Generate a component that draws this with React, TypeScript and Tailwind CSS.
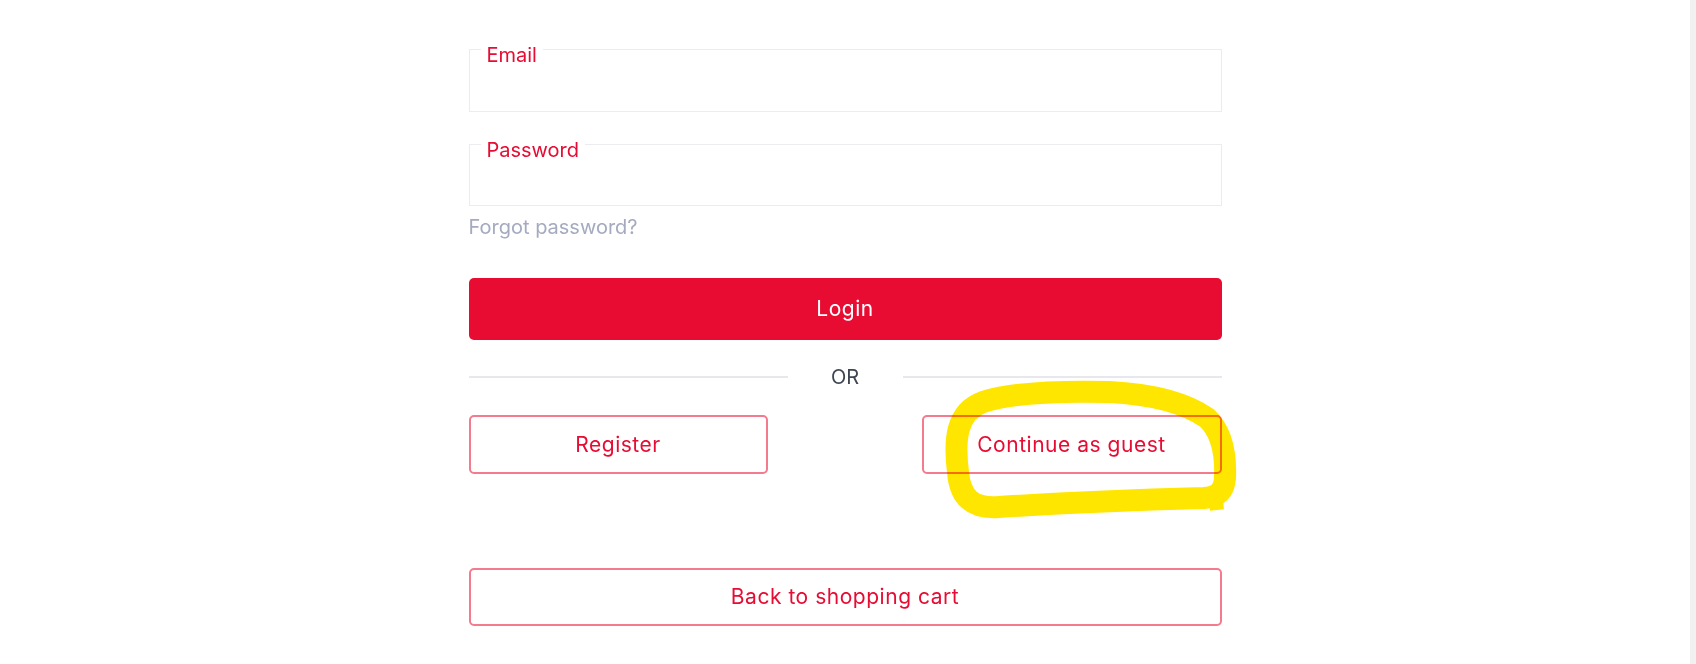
import React from 'react';

function Field({ label, height }: { label: string; height: string }) {
  return (
    <div className={`relative w-full border border-[#ebebf0] ${height}`}>
      <span className="absolute left-[11px] top-[-5px] bg-white px-[6px] text-[20px] leading-[20px] text-[#e60c33]">
        {label}
      </span>
      <input className="h-full w-full bg-transparent px-5 outline-none" aria-label={label} />
    </div>
  );
}

function OutlineButton({ children, className = '' }: { children: React.ReactNode; className?: string }) {
  return (
    <button
      className={`flex items-center justify-center rounded-[5px] border-2 border-[#f47a8e] bg-white text-[21px] tracking-[0.025em] text-[#e60c33] ${className}`}
    >
      {children}
    </button>
  );
}

export default function App() {
  return (
    <div
      className="flex h-[664px] w-full bg-white"
      style={{ fontFamily: 'Inter, "Noto Sans", sans-serif' }}
    >
      <main className="flex flex-1 justify-center">
        <div className="relative w-[753px] pt-[49px]">
          {/* Login form */}
          <Field label="Email" height="h-[63px]" />
          <div className="mt-[32px]">
            <Field label="Password" height="h-[62px]" />
          </div>
          <a className="mt-[7px] block text-[20px] leading-[28px] text-[#a5aac0]">Forgot password?</a>

          <button className="mt-[37px] flex h-[62px] w-full items-center justify-center rounded-[5px] bg-[#e80c33] text-[21px] tracking-[0.025em] text-white">
            Login
          </button>

          {/* Divider */}
          <div className="mt-[23px] flex h-[28px] items-center">
            <div className="h-[2px] flex-1 bg-[#e7e7ee]" />
            <span className="w-[115px] text-center text-[20px] text-[#3f4652]">OR</span>
            <div className="h-[2px] flex-1 bg-[#e7e7ee]" />
          </div>

          <div className="mt-[24px] flex justify-between">
            <OutlineButton className="h-[59px] w-[299px]">Register</OutlineButton>
            <OutlineButton className="h-[59px] w-[300px]">Continue as guest</OutlineButton>
          </div>

          <OutlineButton className="mt-[94px] h-[58px] w-full">Back to shopping cart</OutlineButton>

          {/* Marker highlight drawn over the screenshot */}
          <svg
            className="pointer-events-none absolute left-0 top-0 overflow-visible mix-blend-multiply"
            width="800"
            height="600"
            viewBox="0 0 800 600"
          >
            <path
              d="M489 472 C485 440 487 412 514 402 C545 392 600 391 640 392 C680 394 715 402 738 418 C753 432 757 455 756 478 C755 492 748 497 735 498 C660 500 590 503 530 507 C503 509 491 497 489 472 Z"
              fill="none"
              stroke="#ffe600"
              strokeWidth="22"
              strokeLinejoin="round"
              strokeLinecap="round"
            />
            <path d="M746 490 L748 510" stroke="#ffe600" strokeWidth="14" strokeLinecap="butt" />
          </svg>
        </div>
      </main>
      <div className="w-[6px] bg-[#f1f1f1]" />
    </div>
  );
}
